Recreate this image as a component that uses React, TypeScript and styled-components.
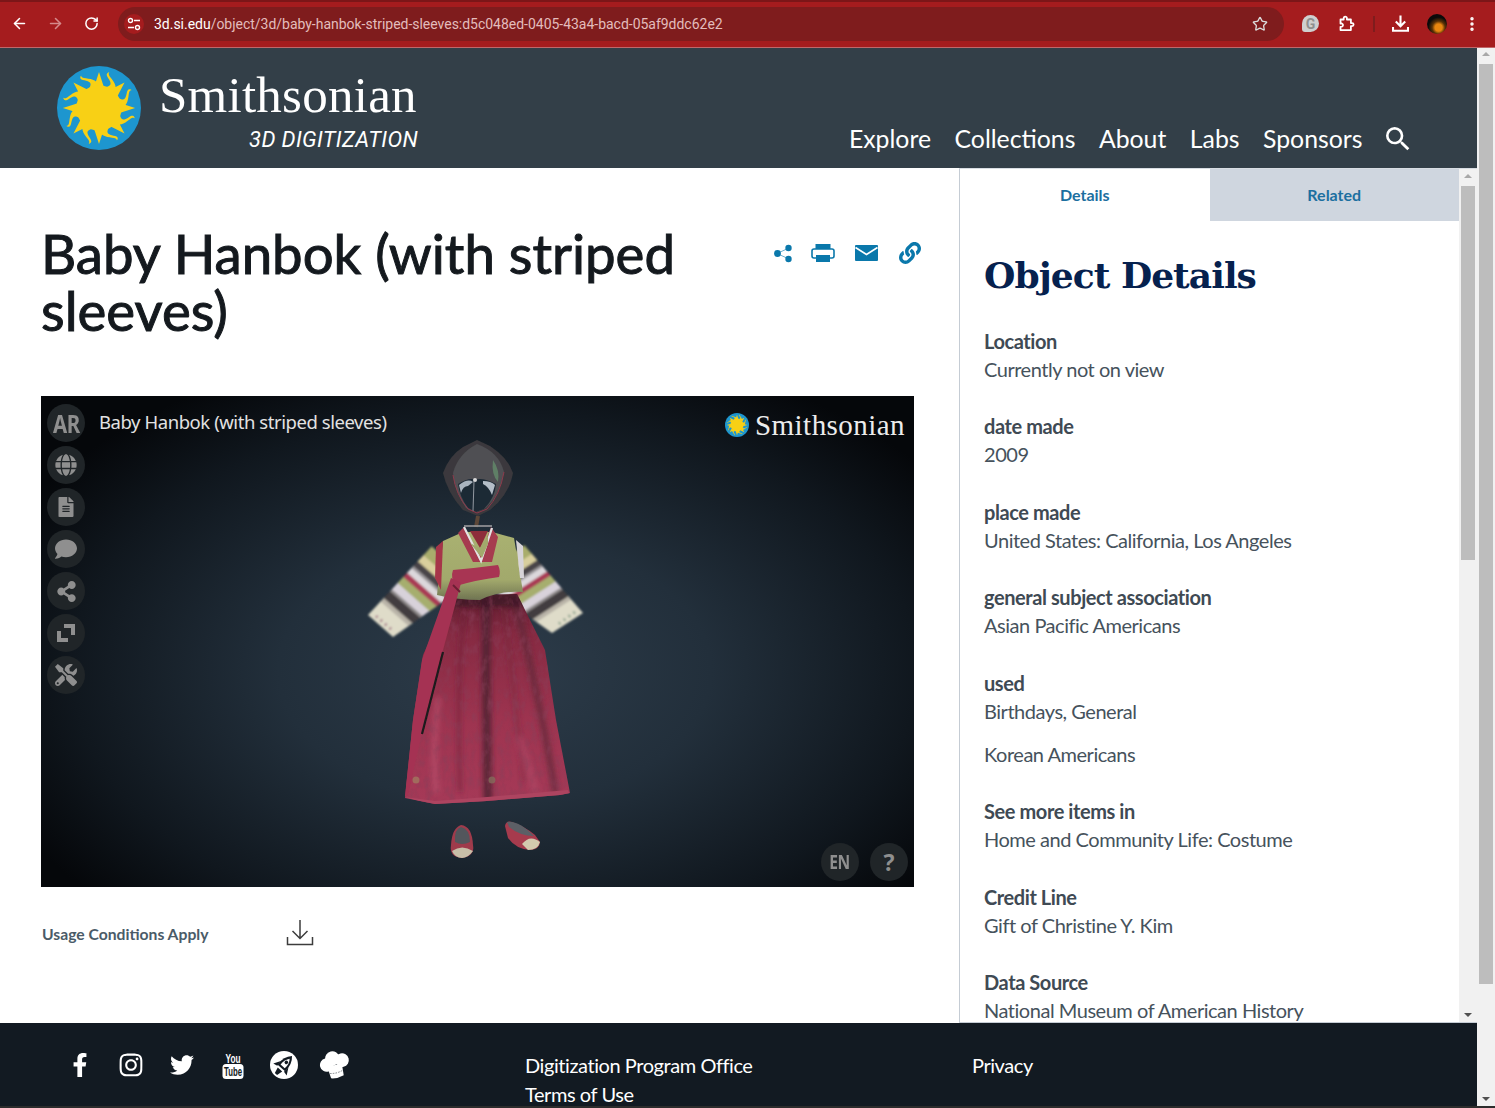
import React from "react";
import styled, { createGlobalStyle } from "styled-components";
import { ArrowLeft, ArrowRight, RotateCw, Star, MoreVertical } from "lucide-react";
import { MdSearch } from "react-icons/md";
import {
  FaGlobe, FaFileAlt, FaComment, FaShareAlt, FaTools, FaLink, FaFacebookF, FaInstagram, FaTwitter,
} from "react-icons/fa";

const Global = createGlobalStyle`
  html, body { margin: 0; padding: 0; background: #fff; overflow: hidden; }
  * { box-sizing: border-box; }
  body { font-family: "Lato", "Liberation Sans", sans-serif; }
`;

const Page = styled.div`
  width: 1495px; height: 1108px; display: flex; flex-direction: column; overflow: hidden; background: #2a2a2a;
`;
const BrowserBar = styled.div`
  height: 48px; flex: none; display: flex; align-items: center; background: #a51c1e;
  border-top: 2px solid #7c1618; border-bottom: 1px solid #c0686a; padding: 0 0 2px 0; color: #fff;
`;
const NavIcon = styled.span<{ $dim?: boolean }>`
  width: 36px; flex: none; display: flex; justify-content: center; align-items: center;
  color: ${(p) => (p.$dim ? "#d58a8b" : "#fff")};
`;
const NavIcons = styled.div`
  width: 118px; flex: none; display: flex; padding-left: 1px;
`;
const Address = styled.div`
  width: 1166px; height: 34px; flex: none; border-radius: 17px; background: #7f1c1d; display: flex; align-items: center; padding: 0 16px 0 6px;
`;
const TuneBadge = styled.span`
  width: 20px; height: 20px; border-radius: 50%; background: #a51c1e; flex: none; display: flex; align-items: center; justify-content: center; margin-right: 10px;
`;
const Url = styled.div`
  flex: 1; font: 400 14px "Roboto", "Liberation Sans", sans-serif; color: #e3bcbc; white-space: nowrap; letter-spacing: -0.02px;
  b { font-weight: 400; color: #fff; }
`;
const Tools = styled.div`
  flex: 1; display: flex; align-items: center; padding-left: 18px;
`;
const Grammarly = styled.span`
  width: 17px; height: 17px; border-radius: 50% 50% 50% 3px; background: #cfcfcf; color: #8f8f8f; font: 700 14px "Roboto", sans-serif;
  display: flex; align-items: center; justify-content: center; margin-right: 20px;
`;
const Divider = styled.span`
  width: 2px; height: 16px; background: #7f1c1d; margin: 0 17px 0 17px;
`;
const Avatar = styled.span`
  width: 20px; height: 20px; border-radius: 50%; margin: 0 16px 0 18px;
  background: radial-gradient(circle at 58% 68%, #e8860f 0 20%, #5a3206 36%, #0a0a0a 58%);
`;

const Workspace = styled.div`
  height: 1058px; flex: none; display: flex;
`;
const Main = styled.div`
  width: 1477px; flex: none; display: flex; flex-direction: column; background: #fff;
`;
const OuterBar = styled.div`
  width: 18px; flex: none; background: #f1f1f1; display: flex; flex-direction: column; align-items: center; padding-top: 4px;
`;
const InnerBar = styled.div`
  width: 18px; flex: none; background: #f1f1f1; display: flex; flex-direction: column; align-items: center; padding-top: 5px;
`;
const ArrowUp = styled.span`
  width: 0; height: 0; border-left: 4px solid transparent; border-right: 4px solid transparent; border-bottom: 4px solid #a8a8a8; flex: none;
`;
const ArrowDown = styled.span`
  width: 0; height: 0; border-left: 4px solid transparent; border-right: 4px solid transparent; border-top: 4px solid #505050; flex: none; margin-top: auto; margin-bottom: 5px;
`;
const Thumb = styled.div<{ $top: number; $h: number }>`
  width: 14px; flex: none; height: ${(p) => p.$h}px; margin-top: ${(p) => p.$top}px; background: #bdbdbd;
`;

const Header = styled.header`
  height: 120px; flex: none; background: #333f48; display: flex; padding-left: 57px;
`;
const LogoMark = styled.div`
  width: 84px; height: 84px; margin-top: 18px; flex: none;
`;
const LogoText = styled.div`
  width: 258px; margin-left: 18px; display: flex; flex-direction: column; align-items: flex-end;
`;
const LogoName = styled.div`
  font: 400 51px/1 "Liberation Serif", serif; color: #fff; margin-top: 22px; margin-left: -2px; width: 100%; letter-spacing: 0.25px;
`;
const LogoSub = styled.div`
  font: italic 400 22px/1 "Roboto", sans-serif; color: #fff; margin-top: 8px; margin-right: -1px; white-space: nowrap; letter-spacing: 0.35px;
`;
const Nav = styled.nav`
  margin-left: auto; display: flex; align-items: center; gap: 23.5px; height: 42px; margin-top: 70px; padding-right: 63px;
`;
const NavLink = styled.a`
  font: 400 24.8px/1 "Lato", sans-serif; color: #fff; white-space: nowrap;
`;
const SearchSlot = styled.span`
  display: flex; margin: 0 0 0 -4px; color: #fff;
`;

const Content = styled.div`
  height: 855px; flex: none; display: flex;
`;
const LeftCol = styled.div`
  width: 959px; flex: none; padding: 57px 0 0 41px;
`;
const TitleRow = styled.div`
  display: flex; height: 115px; align-items: flex-start;
`;
const Title = styled.h1`
  margin: 0; width: 700px; font: 400 54.6px/57px "Lato", sans-serif; color: #14191e; -webkit-text-stroke: 1px #14191e;
`;
const ShareRow = styled.div`
  margin-left: 30px; display: flex; align-items: center; height: 26px; margin-top: 15px; color: #0a78ab;
`;
const ShareSlot = styled.span<{ $w: number }>`
  width: ${(p) => p.$w}px; flex: none; display: flex; justify-content: center; align-items: center;
`;

const Viewer = styled.div`
  position: relative; width: 873px; height: 491px; margin-top: 56px; overflow: hidden;
  background: radial-gradient(ellipse 62% 68% at 52% 56%, #2d3c4a 0%, #222f3b 40%, #10171e 78%, #05070a 100%);
`;
const DressArt = styled.svg`
  position: absolute; inset: 0; width: 873px; height: 491px;
`;
const ToolColumn = styled.div`
  position: absolute; left: 6px; top: 8px; display: flex; flex-direction: column; gap: 4px;
`;
const RoundBtn = styled.div`
  width: 38px; height: 38px; border-radius: 50%; background: #202528; color: #8f8f8f; display: flex; align-items: center; justify-content: center;
  font: 700 25px/1 "Noto Sans", sans-serif;
`;
const SqueezedLabel = styled.span`
  display: inline-block; transform: scaleX(0.82); letter-spacing: -0.5px;
`;
const ViewerTitle = styled.div`
  position: absolute; left: 58px; top: 13px; font: 400 18.5px/26px "Noto Sans", sans-serif; color: #e2e2e2; letter-spacing: -0.44px; white-space: nowrap;
`;
const ViewerBrand = styled.div`
  position: absolute; right: 9px; top: 12px; display: flex; align-items: center; gap: 6px;
`;
const ViewerBrandText = styled.span`
  font: 400 29px/34px "Liberation Serif", serif; color: #ececec; letter-spacing: 0.45px;
`;
const ViewerCorner = styled.div`
  position: absolute; right: 6px; bottom: 6px; display: flex; gap: 11px;
`;
const SmallBtn = styled(RoundBtn)`
  font-size: 19px;
`;
const HelpBtn = styled(RoundBtn)`
  font-size: 23px;
`;
const UsageRow = styled.div`
  display: flex; align-items: center; height: 34px; margin-top: 28px;
`;
const Usage = styled.span`
  font: 700 15.7px/1 "Lato", sans-serif; color: #4a5b68; width: 245px; padding-left: 1px; margin-top: 5px;
`;

const Panel = styled.aside`
  width: 518px; flex: none; display: flex; border-left: 1px solid #c5ccd4; border-bottom: 1px solid #c5ccd4; border-top: 1px solid #d8dde3; overflow: hidden;
`;
const PanelBody = styled.div`
  flex: 1; min-width: 0; display: flex; flex-direction: column; overflow: hidden;
`;
const Tabs = styled.div`
  display: grid; grid-template-columns: 1fr 1fr; height: 52px; flex: none;
`;
const Tab = styled.div<{ $active?: boolean }>`
  display: flex; align-items: center; justify-content: center; font: 700 16px/1 "Lato", sans-serif; color: #1c6fa0;
  background: ${(p) => (p.$active ? "#fff" : "#cfd6df")};
`;
const Details = styled.div`
  padding: 0 24px; overflow: hidden; flex: 1;
`;
const DetailsHead = styled.h2`
  margin: 31px 0 28px; font: 700 36px/46px "DejaVu Serif", serif; color: #06214e; letter-spacing: -0.95px; white-space: nowrap;
`;
const Item = styled.div`
  margin-bottom: 28.5px;
`;
const Label = styled.div`
  font: 700 20px/27px "Lato", sans-serif; padding-top: 1.5px; color: #3f4a54; letter-spacing: -0.42px;
`;
const Value = styled.div`
  font: 400 20px/28.5px "Lato", sans-serif; color: #46525c; letter-spacing: -0.47px;
  & + & { margin-top: 14.5px; }
`;

const Footer = styled.footer`
  height: 83px; flex: none; background: #121a22; display: flex; color: #fff; padding-left: 54px;
`;
const Social = styled.div`
  width: 471px; flex: none; display: flex; height: 56px; margin-top: 14px;
`;
const SocialSlot = styled.span`
  width: 51px; flex: none; display: flex; align-items: center; justify-content: center;
`;
const FootCol = styled.div<{ $w: number }>`
  width: ${(p) => p.$w}px; flex: none; padding-top: 28px; font: 400 20px/29px "Lato", sans-serif; white-space: nowrap; letter-spacing: -0.43px;
  a { display: block; }
`;
const BottomStrip = styled.div`
  height: 2px; flex: none; background: #2c2c2c;
`;

function Sun({ size }: { size: number }) {
  const pt = (ang: number, r: number) => `${(50 + Math.cos(ang) * r).toFixed(2)} ${(50 + Math.sin(ang) * r).toFixed(2)}`;
  const rays: string[] = [];
  const N = 8;
  for (let i = 0; i < N; i++) {
    const a = (i / N) * Math.PI * 2 - Math.PI / 2;
    rays.push(`M${pt(a - 0.22, 26)} L${pt(a, 43)} L${pt(a + 0.22, 26)} Z`);
    const b = a + Math.PI / N;
    const left: string[] = [];
    const right: string[] = [];
    for (let k = 0; k <= 14; k++) {
      const t = k / 14;
      const r = 25 + t * 19;
      const off = 0.16 * Math.sin(t * Math.PI * 1.6 + 0.2) + 0.02;
      const w = 0.17 * (1 - t * 0.95);
      left.push(pt(b + off - w, r));
      right.unshift(pt(b + off + w, r));
    }
    rays.push(`M${left.concat(right).join(" L")} Z`);
  }
  return (
    <svg width={size} height={size} viewBox="0 0 100 100" style={{ display: "block" }}>
      <circle cx="50" cy="50" r="50" fill="#1d96cf" />
      <path d={rays.join(" ")} fill="#f8d015" />
      <circle cx="50" cy="50" r="27" fill="#f8d015" />
    </svg>
  );
}

type P = [number, number];
const lerp = (a: P, b: P, t: number): P => [a[0] + (b[0] - a[0]) * t, a[1] + (b[1] - a[1]) * t];
function Sleeve({ c1, c2, s1, s2, stripes }: { c1: P; c2: P; s1: P; s2: P; stripes: [number, number, string][] }) {
  return (
    <g>
      {stripes.map(([t0, t1, fill], i) => {
        const pts = [lerp(c1, s1, t0), lerp(c1, s1, t1 + 0.01), lerp(c2, s2, t1 + 0.01), lerp(c2, s2, t0)];
        return <polygon key={i} points={pts.map((p) => p.join(",")).join(" ")} fill={fill} />;
      })}
    </g>
  );
}
const sleeveStripes: [number, number, string][] = [
  [0, 0.2, "#dfdcc9"], [0.2, 0.25, "#b9b4a8"], [0.25, 0.35, "#423c3f"], [0.35, 0.38, "#8e8a8a"], [0.38, 0.47, "#d8d2da"],
  [0.47, 0.56, "#a6ae6e"], [0.56, 0.62, "#a93a55"], [0.62, 0.69, "#dcd8dc"], [0.69, 0.72, "#9a969a"], [0.72, 0.79, "#4a4448"],
  [0.79, 0.88, "#d9cf9d"], [0.88, 1, "#a9ad6c"],
];

function Dress() {
  return (
    <DressArt viewBox="41 396 873 491">
      <defs>
        <linearGradient id="skirtG" x1="0" y1="0" x2="0" y2="1">
          <stop offset="0" stopColor="#5a1c2d" />
          <stop offset="0.2" stopColor="#862a42" />
          <stop offset="0.6" stopColor="#9e3450" />
          <stop offset="1" stopColor="#a63a58" />
        </linearGradient>
        <linearGradient id="jacketG" x1="0" y1="0" x2="0" y2="1">
          <stop offset="0" stopColor="#a9b170" />
          <stop offset="0.7" stopColor="#a2a96c" />
          <stop offset="1" stopColor="#6f7452" />
        </linearGradient>
        <clipPath id="skirtClip">
          <path d="M450 596 L517 594 L545 650 L556 720 L570 793 L560 795 L487 801 L435 804 L405 798 L413 720 L423 655 Z" />
        </clipPath>
        <filter id="soft" x="-20%" y="-20%" width="140%" height="140%"><feGaussianBlur stdDeviation="2.4" /></filter>
        <filter id="soft1" x="-20%" y="-20%" width="140%" height="140%"><feGaussianBlur stdDeviation="0.6" /></filter>
        <filter id="soft2" x="-20%" y="-20%" width="140%" height="140%"><feGaussianBlur stdDeviation="0.95" /></filter>
        <filter id="grain">
          <feTurbulence type="fractalNoise" baseFrequency="0.16 0.09" numOctaves="3" seed="4" />
          <feColorMatrix values="0 0 0 0 0.25  0 0 0 0 0.05  0 0 0 0 0.1  0 0 0 1.8 -0.78" />
        </filter>
      </defs>

      {/* hat */}
      <g filter="url(#soft1)">
        <path d="M477 440 L490 446 Q508 458 513 473 Q509 495 490 510 L478 516 L463 510 Q447 492 443 473 Q449 456 463 447 Z" fill="#3a393c" />
        <path d="M477 444 Q499 452 504 472 Q500 495 486 508 L477 512 L466 508 Q454 490 453 473 Q458 454 477 444 Z" fill="#4f4f53" />
        <path d="M458 484 Q470 477 475 480 Q482 477 496 484 Q495 498 484 509 L476 512 L468 508 Q460 498 458 484 Z" fill="#1e2a36" />
        <path d="M459 485 Q468 478 473 482 L468 486 Q463 486 461 493 Z" fill="#a9b4bf" />
        <path d="M483 481 Q491 481 495 485 L492 495 Q489 487 483 484 Z" fill="#b4bec8" />
        <circle cx="475" cy="480" r="2" fill="#d8d8d8" />
        <path d="M474 481 L473 511" stroke="#aeb5bb" strokeWidth="0.8" />
        <path d="M493 460 Q500 470 498 482 Q491 474 493 460 Z" fill="#5f7f66" />
        <path d="M453 475 Q456 495 468 509 L477 513 L487 509 Q500 495 504 472" fill="none" stroke="#8d3a4c" strokeWidth="1" />
        <path d="M478 516 L476 527" stroke="#5b4638" strokeWidth="4" />
      </g>

      {/* sleeves */}
      <g filter="url(#soft2)">
        <Sleeve c1={[368, 615]} c2={[393, 637]} s1={[431, 547]} s2={[471, 582]} stripes={sleeveStripes} />
        <Sleeve c1={[583, 613]} c2={[552, 633]} s1={[525, 546]} s2={[475, 578]} stripes={sleeveStripes} />
        <path d="M376 616 L393 631" stroke="#a87f8c" strokeWidth="3" strokeDasharray="2 4" />
        <path d="M575 612 L556 626" stroke="#8ea48e" strokeWidth="3" strokeDasharray="2 4" />
      </g>

      {/* skirt */}
      <g clipPath="url(#skirtClip)">
        <rect x="400" y="590" width="175" height="220" fill="url(#skirtG)" />
        <g filter="url(#soft)" fill="none" strokeLinecap="round">
          <path d="M486 600 Q486 700 488 800" stroke="#4a2030" strokeWidth="9" opacity="0.8" />
          <path d="M515 600 Q540 700 555 790" stroke="#5e2a38" strokeWidth="7" opacity="0.7" />
          <path d="M466 600 Q456 660 460 790" stroke="#6d2036" strokeWidth="5" opacity="0.5" />
          <path d="M504 610 Q514 690 524 780" stroke="#6d2036" strokeWidth="4" opacity="0.4" />
          <path d="M440 600 L540 600" stroke="#3d1826" strokeWidth="14" opacity="0.8" />
          <path d="M438 700 Q432 750 436 790" stroke="#b84e6c" strokeWidth="7" opacity="0.6" />
          <path d="M520 740 Q530 770 535 790" stroke="#b24a68" strokeWidth="8" opacity="0.5" />
        </g>
        <rect x="400" y="590" width="175" height="220" filter="url(#grain)" opacity="0.7" />
        <path d="M405 797 L435 801 L487 797 L568 790 L570 795 L487 803 L435 806 Z" fill="#ad4460" />
        <circle cx="416" cy="780" r="3.5" fill="#a07c60" opacity="0.75" filter="url(#soft1)" />
        <circle cx="492" cy="780" r="3.5" fill="#84705c" opacity="0.75" filter="url(#soft1)" />
      </g>

      {/* jacket */}
      <g filter="url(#soft1)">
        <path d="M443 541 L463 532 L492 532 L514 538 L523 592 Q500 590 480 600 Q458 600 437 595 Z" fill="url(#jacketG)" />
        <path d="M436 547 L443 541 L441 590 L435 578 Z" fill="#a63648" />
        <path d="M516 540 L523 546 L524 578 L520 578 Z" fill="#d7d4d8" />
        {/* collar */}
        <path d="M458 533 L464 527 L480 556 L491 527 L498 537 L492 562 L473 562 Z" fill="#a63a50" />
        <path d="M464 527 L481 561 L492 528" fill="none" stroke="#e3e3e3" strokeWidth="2.2" />
        <path d="M464 526 L492 526" stroke="#9a9a9e" strokeWidth="1.6" />
        <path d="M470 531 L488 531 L480 548 Z" fill="#8e2f3a" />
        <path d="M470 543 L480 548 L488 536 L488 544 L482 558 Z" fill="#a2a96c" />
        {/* tie */}
        <path d="M453 570 Q476 568 498 565 Q501 571 499 577 Q476 580 456 586 Q450 578 453 570 Z" fill="#a83452" />
        <path d="M451 578 L461 583 L443 650 L422 733 L408 796 L405 796 L413 720 L422 660 Z" fill="#a53352" />
        <path d="M453 585 L460 592" stroke="#6d1f35" strokeWidth="2" />
        <path d="M443 652 L422 734" stroke="#1a1a1c" strokeWidth="2.2" />
      </g>

      {/* shoes */}
      <g filter="url(#soft1)">
        <path d="M451 845 Q452 828 461 825 Q472 826 473 845 Q475 856 462 858 Q449 857 451 845 Z" fill="#9f3a4c" />
        <path d="M455 842 Q454 829 461 827 Q470 829 470 842 Q462 846 455 842 Z" fill="#53565c" />
        <path d="M452 851 Q462 844 473 851 Q468 858 462 858 Q455 858 452 851 Z" fill="#c8bfa8" />
        <path d="M505 826 Q506 820 512 822 Q524 826 535 835 L540 842 Q540 849 530 850 Q516 849 508 838 Z" fill="#a63a4e" />
        <path d="M507 822 Q518 820 534 836 Q520 836 509 827 Z" fill="#5c5f66" />
        <path d="M522 844 Q530 834 540 842 Q538 850 528 850 Z" fill="#d3c9ae" />
      </g>
    </DressArt>
  );
}

function ExpandIcon() {
  return (
    <svg width="20" height="20" viewBox="0 0 20 20" fill="#8f8f8f">
      <path d="M8 1h11v11h-4V5H8zM1 8h4v7h7v4H1z" />
    </svg>
  );
}
function TuneIcon() {
  return (
    <svg width="14" height="14" viewBox="0 0 14 14" fill="none" stroke="#fff" strokeWidth="1.4">
      <circle cx="3.5" cy="3.5" r="2" />
      <path d="M7 3.5h6M1 10.5h6" />
      <circle cx="10.5" cy="10.5" r="2" />
    </svg>
  );
}
function ThinShare() {
  return (
    <svg width="22" height="20" viewBox="0 0 22 20" fill="#0a78ab">
      <path d="M5 10.5 L17 5 M5 10.5 L17 16" stroke="#6fb0cf" strokeWidth="1" />
      <circle cx="5.5" cy="10.5" r="3.4" /><circle cx="16.5" cy="5" r="3.2" /><circle cx="16.5" cy="16" r="3.2" />
    </svg>
  );
}
function Printer() {
  return (
    <svg width="24" height="19" viewBox="0 0 24 19" style={{ display: "block" }}>
      <rect x="4.5" y="0" width="15" height="5" fill="#0a78ab" />
      <rect x="1" y="5" width="22" height="9" rx="2" fill="#fff" stroke="#0a78ab" strokeWidth="1.6" />
      <rect x="5" y="11" width="14" height="7" fill="#0a78ab" />
    </svg>
  );
}
function Mail() {
  return (
    <svg width="23" height="16" viewBox="0 0 23 16" style={{ display: "block" }}>
      <rect x="0" y="0" width="23" height="16" rx="1" fill="#0a78ab" />
      <path d="M0.5 2.5 L11.5 9.5 L22.5 2.5" fill="none" stroke="#fff" strokeWidth="1.6" />
    </svg>
  );
}
function Tray() {
  return (
    <svg width="28" height="27" viewBox="0 0 28 27" fill="none" stroke="#3c3c3c" strokeWidth="1.5">
      <path d="M14 1v18M6.5 12l7.5 7.5 7.5-7.5" />
      <path d="M1.5 18v7.5h25V18" />
    </svg>
  );
}
function ExtensionIcon() {
  return (
    <svg width="17" height="17" viewBox="0 0 17 17" fill="none" stroke="#fff" strokeWidth="1.8" strokeLinejoin="round">
      <path d="M1.5 4.5h3.2V3.2a1.6 1.6 0 0 1 3.2 0v1.3h4v3.6h1.2a1.5 1.5 0 0 1 0 3H11.9v4H1.5v-3.3l1.4-.1a1.7 1.7 0 0 0 0-3.2H1.5z" />
    </svg>
  );
}
function DownloadIcon() {
  return (
    <svg width="17" height="17" viewBox="0 0 17 17" fill="none" stroke="#fff" strokeWidth="2.1">
      <path d="M8.5 0.5v10.5M3.8 6.6l4.7 4.7 4.7-4.7" />
      <path d="M1 12v3.8h15V12" />
    </svg>
  );
}
function YouTubeStack() {
  return (
    <svg width="22" height="27" viewBox="0 0 22 27" style={{ display: "block", overflow: "visible" }}>
      <text x="3.5" y="10.5" fontFamily="Liberation Sans, sans-serif" fontWeight="700" fontSize="12.5" fill="#fff" textLength="15" lengthAdjust="spacingAndGlyphs">You</text>
      <rect x="0.5" y="12" width="21" height="15" rx="3.5" fill="#fff" />
      <text x="2" y="24" fontFamily="Liberation Sans, sans-serif" fontWeight="700" fontSize="13" fill="#121a22" textLength="18" lengthAdjust="spacingAndGlyphs">Tube</text>
    </svg>
  );
}
function RocketBadge() {
  return (
    <svg width="28" height="28" viewBox="0 0 28 28" style={{ display: "block" }}>
      <circle cx="14" cy="14" r="14" fill="#fff" />
      <g transform="rotate(42 14 14)">
        <path d="M14 2 Q20 8 19 18 H9 Q8 8 14 2 Z" fill="#121a22" />
        <path d="M14 5.5 Q17.4 9.5 16.8 16 H11.2 Q10.6 9.5 14 5.5 Z" fill="#fff" />
        <circle cx="14" cy="10.5" r="1.8" fill="#121a22" />
        <path d="M9 13 L5 20 L9.5 19 Z M19 13 L23 20 L18.5 19 Z" fill="#121a22" />
        <path d="M11 20 H17 L15.5 26 H12.5 Z" fill="#121a22" />
      </g>
    </svg>
  );
}
function ChefHat() {
  return (
    <svg width="32" height="30" viewBox="0 0 32 30" fill="#fff" style={{ display: "block" }}>
      <g transform="rotate(-14 16 15)">
        <circle cx="8" cy="13" r="6.8" /><circle cx="15" cy="8" r="7.2" /><circle cx="24" cy="12" r="6.8" />
        <path d="M8 15 H23 L22 27 Q15 29 9 27 Z" />
        <path d="M9 22 Q15.5 24 22 22" stroke="#6b7177" strokeWidth="0.8" strokeDasharray="1.6 1.2" fill="none" />
      </g>
    </svg>
  );
}

const details: { label: string; values: string[] }[] = [
  { label: "Location", values: ["Currently not on view"] },
  { label: "date made", values: ["2009"] },
  { label: "place made", values: ["United States: California, Los Angeles"] },
  { label: "general subject association", values: ["Asian Pacific Americans"] },
  { label: "used", values: ["Birthdays, General", "Korean Americans"] },
  { label: "See more items in", values: ["Home and Community Life: Costume"] },
  { label: "Credit Line", values: ["Gift of Christine Y. Kim"] },
  { label: "Data Source", values: ["National Museum of American History"] },
];

export default function App() {
  return (
    <Page>
      <Global />
      <BrowserBar>
        <NavIcons>
          <NavIcon><ArrowLeft size={17} strokeWidth={2.2} /></NavIcon>
          <NavIcon $dim><ArrowRight size={17} strokeWidth={2.2} /></NavIcon>
          <NavIcon><RotateCw size={15} strokeWidth={2.4} /></NavIcon>
        </NavIcons>
        <Address>
          <TuneBadge><TuneIcon /></TuneBadge>
          <Url><b>3d.si.edu</b>/object/3d/baby-hanbok-striped-sleeves:d5c048ed-0405-43a4-bacd-05af9ddc62e2</Url>
          <Star size={16} color="#dcdcdc" strokeWidth={2} />
        </Address>
        <Tools>
          <Grammarly>G</Grammarly>
          <ExtensionIcon />
          <Divider />
          <DownloadIcon />
          <Avatar />
          <MoreVertical size={18} strokeWidth={2.6} />
        </Tools>
      </BrowserBar>

      <Workspace>
        <Main>
          <Header>
            <LogoMark><Sun size={84} /></LogoMark>
            <LogoText>
              <LogoName>Smithsonian</LogoName>
              <LogoSub>3D DIGITIZATION</LogoSub>
            </LogoText>
            <Nav>
              <NavLink>Explore</NavLink>
              <NavLink>Collections</NavLink>
              <NavLink>About</NavLink>
              <NavLink>Labs</NavLink>
              <NavLink>Sponsors</NavLink>
              <SearchSlot><MdSearch size={32} /></SearchSlot>
            </Nav>
          </Header>

          <Content>
            <LeftCol>
              <TitleRow>
                <Title>Baby Hanbok (with striped sleeves)</Title>
                <ShareRow>
                  <ShareSlot $w={24}><ThinShare /></ShareSlot>
                  <ShareSlot $w={56}><Printer /></ShareSlot>
                  <ShareSlot $w={30}><Mail /></ShareSlot>
                  <ShareSlot $w={58}><FaLink size={22} /></ShareSlot>
                </ShareRow>
              </TitleRow>
              <Viewer>
                <Dress />
                <ToolColumn>
                  <RoundBtn><SqueezedLabel>AR</SqueezedLabel></RoundBtn>
                  <RoundBtn><FaGlobe size={22} /></RoundBtn>
                  <RoundBtn><FaFileAlt size={20} /></RoundBtn>
                  <RoundBtn><FaComment size={22} /></RoundBtn>
                  <RoundBtn><FaShareAlt size={21} /></RoundBtn>
                  <RoundBtn><ExpandIcon /></RoundBtn>
                  <RoundBtn><FaTools size={22} /></RoundBtn>
                </ToolColumn>
                <ViewerTitle>Baby Hanbok (with striped sleeves)</ViewerTitle>
                <ViewerBrand>
                  <Sun size={24} />
                  <ViewerBrandText>Smithsonian</ViewerBrandText>
                </ViewerBrand>
                <ViewerCorner>
                  <SmallBtn><SqueezedLabel>EN</SqueezedLabel></SmallBtn>
                  <HelpBtn>?</HelpBtn>
                </ViewerCorner>
              </Viewer>
              <UsageRow>
                <Usage>Usage Conditions Apply</Usage>
                <Tray />
              </UsageRow>
            </LeftCol>

            <Panel>
              <PanelBody>
                <Tabs>
                  <Tab $active>Details</Tab>
                  <Tab>Related</Tab>
                </Tabs>
                <Details>
                  <DetailsHead>Object Details</DetailsHead>
                  {details.map((d) => (
                    <Item key={d.label}>
                      <Label>{d.label}</Label>
                      {d.values.map((v) => (
                        <Value key={v}>{v}</Value>
                      ))}
                    </Item>
                  ))}
                </Details>
              </PanelBody>
              <InnerBar>
                <ArrowUp />
                <Thumb $top={8} $h={374} />
                <ArrowDown />
              </InnerBar>
            </Panel>
          </Content>

          <Footer>
            <Social>
              <SocialSlot><FaFacebookF size={24} /></SocialSlot>
              <SocialSlot><FaInstagram size={26} /></SocialSlot>
              <SocialSlot><FaTwitter size={24} /></SocialSlot>
              <SocialSlot><YouTubeStack /></SocialSlot>
              <SocialSlot><RocketBadge /></SocialSlot>
              <SocialSlot><ChefHat /></SocialSlot>
            </Social>
            <FootCol $w={447}>
              <a>Digitization Program Office</a>
              <a>Terms of Use</a>
            </FootCol>
            <FootCol $w={200}>
              <a>Privacy</a>
            </FootCol>
          </Footer>
        </Main>
        <OuterBar>
          <ArrowUp />
          <Thumb $top={8} $h={920} />
          <ArrowDown />
        </OuterBar>
      </Workspace>
      <BottomStrip />
    </Page>
  );
}
